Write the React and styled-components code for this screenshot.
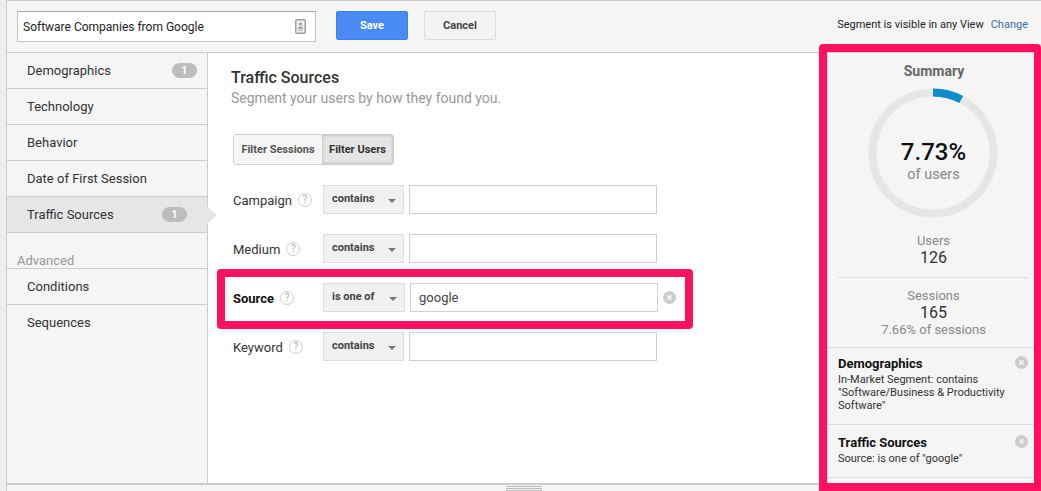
import React from "react";
import styled, { createGlobalStyle } from "styled-components";

const Global = createGlobalStyle`
  html, body { margin: 0; padding: 0; background: #eeeeee; }
  * { box-sizing: border-box; }
  body { font-family: Roboto, "Liberation Sans", sans-serif; overflow: hidden; }
`;

const Page = styled.div`
  width: 1041px;
  height: 491px;
  overflow: hidden;
  padding-left: 6px;
  background: #eeeeee;
`;
const Frame = styled.div`
  height: 491px;
  display: flex;
  flex-direction: column;
  border-left: 1px solid #cccccc;
  background: #ffffff;
`;
const TopBar = styled.header`
  height: 53px;
  flex: none;
  display: flex;
  align-items: flex-start;
  padding: 10px 13px 0 10px;
  background: #f5f5f5;
  border-top: 1px solid #cccccc;
  border-bottom: 1px solid #cccccc;
`;
const NameBox = styled.div`
  width: 299px;
  height: 31px;
  display: flex;
  align-items: center;
  justify-content: space-between;
  padding: 0 9px 0 5px;
  background: #fff;
  border: 1px solid #c4c4c4;
  border-top-color: #a8a8a8;
  font-size: 12px;
  color: #222;
`;
const ActionButton = styled.button`
  height: 29px;
  width: 72px;
  margin-left: ${p => p.$gap}px;
  border-radius: 2px;
  border: 1px solid ${p => (p.$primary ? "#3f7fe8" : "#dcdcdc")};
  background: ${p => (p.$primary ? "#4a8af4" : "#f3f3f3")};
  color: ${p => (p.$primary ? "#fff" : "#444")};
  font: 700 11px Roboto, sans-serif;
  padding: 0;
`;
const Visibility = styled.div`
  margin-left: auto;
  display: flex;
  gap: 7px;
  height: 27px;
  align-items: center;
  font-size: 11px;
  color: #222;
`;
const ChangeLink = styled.a`
  color: #3a6ea5;
`;
const Body = styled.div`
  flex: 1;
  display: flex;
  min-height: 0;
`;
const Sidebar = styled.nav`
  width: 201px;
  flex: none;
  background: #f5f5f5;
  border-right: 1px solid #cccccc;
`;
const NavItem = styled.div`
  position: relative;
  height: 36px;
  padding: 0 10px 1px 20px;
  display: flex;
  align-items: center;
  justify-content: space-between;
  border-bottom: ${p => (p.$last ? "none" : "1px solid #cccccc")};
  background: ${p => (p.$active ? "#e6e6e6" : "transparent")};
  font-size: 13px;
  color: #333;
  ${p => p.$active && `padding-right: 20px;`}
`;
const Badge = styled.span`
  width: 25px;
  height: 15px;
  border-radius: 8px;
  background: #bdbdbd;
  color: #fff;
  font-size: 11px;
  font-weight: 700;
  display: flex;
  align-items: center;
  justify-content: center;
`;
const Pointer = styled.span`
  position: absolute;
  right: -10px;
  top: 9px;
  width: 0;
  height: 0;
  border-top: 9px solid transparent;
  border-bottom: 9px solid transparent;
  border-left: 10px solid #e6e6e6;
`;
const SideHeading = styled.div`
  height: 36px;
  padding: 20px 0 0 10px;
  border-bottom: 1px solid #cccccc;
  font-size: 13px;
  line-height: 15px;
  color: #999;
`;
const Main = styled.main`
  flex: 1;
  padding: 15px 0 0 23px;
  min-width: 0;
`;
const Title = styled.h2`
  margin: 0;
  font-size: 16px;
  line-height: 19px;
  font-weight: 500;
  color: #333;
`;
const Subtitle = styled.p`
  margin: 3px 0 0;
  font-size: 14px;
  line-height: 17px;
  color: #999;
`;
const Toggle = styled.div`
  display: inline-flex;
  margin: 27px 0 0 2px;
  height: 31px;
  border: 1px solid #cfcfcf;
  border-radius: 3px;
  overflow: hidden;
  vertical-align: top;
`;
const ToggleItem = styled.div`
  display: flex;
  align-items: center;
  justify-content: center;
  width: ${p => p.$w}px;
  font-size: 11px;
  font-weight: 700;
  color: ${p => (p.$on ? "#333" : "#555")};
  background: ${p => (p.$on ? "#e4e4e4" : "#f5f5f5")};
  box-shadow: ${p => (p.$on ? "inset 0 0 3px #a9a9a9" : "none")};
`;
const Rows = styled.div`
  margin-top: 20px;
  display: flex;
  flex-direction: column;
  gap: 20px;
`;
const Row = styled.div`
  position: relative;
  height: 29px;
  display: flex;
  align-items: center;
  padding-left: 2px;
`;
const RowLabel = styled.div`
  width: 90px;
  flex: none;
  display: flex;
  align-items: center;
  gap: 6px;
  padding-top: 1px;
  font-size: 13px;
  font-weight: ${p => (p.$bold ? 700 : 400)};
  color: ${p => (p.$bold ? "#111" : "#333")};
`;
const Help = styled.span`
  width: 14px;
  height: 14px;
  flex: none;
  border: 1px solid #cfcfcf;
  border-radius: 50%;
  font-size: 10px;
  font-weight: 400;
  line-height: 12px;
  text-align: center;
  color: #aaa;
`;
const Select = styled.div`
  width: ${p => (p.$wide ? 82 : 81)}px;
  height: 29px;
  flex: none;
  padding: 6px 0 0 8px;
  position: relative;
  border: 1px solid #dcdcdc;
  background: #f1f1f1;
  font-size: 11px;
  line-height: 13px;
  font-weight: 700;
  color: #444;
  &::after {
    content: "";
    position: absolute;
    right: 7px;
    top: 13px;
    border-top: 4px solid #777;
    border-left: 4px solid transparent;
    border-right: 4px solid transparent;
  }
`;
const ValueInput = styled.input`
  width: 248px;
  height: 29px;
  margin-left: 5px;
  padding: 0 8px;
  border: 1px solid #cfcfcf;
  outline: none;
  background: #fff;
  font: 13px Roboto, sans-serif;
  color: #444;
`;
const Clear = styled.svg`
  width: ${p => p.$size}px;
  height: ${p => p.$size}px;
  flex: none;
  display: block;
`;
const RowClear = styled.span`
  margin-left: 5px;
  display: flex;
`;
const RowHighlight = styled.div`
  position: absolute;
  left: -14px;
  width: 476px;
  top: -14px;
  bottom: -17px;
  border: 8px solid #ff1160;
  border-radius: 4px;
  pointer-events: none;
`;
const Summary = styled.aside`
  position: relative;
  width: 214px;
  flex: none;
  background: #f5f5f5;
  border-left: 1px solid #dddddd;
`;
const SummaryHighlight = styled.div`
  position: absolute;
  left: -9px;
  right: 0;
  top: -9px;
  bottom: -8px;
  border: 8px solid #ff1160;
  border-right-width: 7px;
  border-radius: 4px 4px 0 0;
  pointer-events: none;
  z-index: 3;
`;
const SummaryTitle = styled.div`
  margin: 0 1px 0 0;
  padding-top: 10px;
  text-align: center;
  font-size: 14px;
  line-height: 16px;
  font-weight: 700;
  color: #666;
`;
const RingWrap = styled.div`
  position: relative;
  width: 130px;
  height: 130px;
  margin: 9px auto 0;
  transform: translateX(-2px);
`;
const RingText = styled.div`
  position: absolute;
  inset: 0;
  display: flex;
  flex-direction: column;
  align-items: center;
  justify-content: center;
  padding: 15px 0 0 2px;
`;
const Percent = styled.div`
  font-size: 24px;
  line-height: 28px;
  font-weight: 500;
  color: #111;
`;
const OfUsers = styled.div`
  font-size: 14.5px;
  line-height: 18px;
  color: #888;
`;
const Stat = styled.div`
  margin: 0 12px 0 10px;
  text-align: center;
  padding: ${p => p.$pad};
  border-bottom: ${p => (p.$rule ? "1px solid #dddddd" : "none")};
`;
const StatLabel = styled.div`
  font-size: 13px;
  line-height: 16px;
  color: #888;
`;
const StatValue = styled.div`
  font-size: 16px;
  line-height: 18px;
  color: #333;
`;
const StatNote = styled.div`
  font-size: 13px;
  line-height: 16px;
  color: #888;
`;
const Criteria = styled.div`
  position: relative;
  height: ${p => p.$h}px;
  padding: ${p => p.$top}px 30px 0 10px;
  border-top: 1px solid #dddddd;
`;
const CriteriaTitle = styled.div`
  font-size: 13px;
  line-height: 16px;
  font-weight: 700;
  color: #111;
`;
const CriteriaText = styled.div`
  font-size: 11px;
  line-height: 13px;
  margin-top: 1px;
  color: #333;
  margin-right: -20px;
`;
const CriteriaClose = styled.span`
  position: absolute;
  right: 13px;
  top: ${p => p.$top}px;
`;
const BottomBar = styled.footer`
  position: relative;
  height: 8px;
  flex: none;
  display: flex;
  justify-content: center;
  background: #f5f5f5;
  border-top: 2px solid #cccccc;
  padding: 1px 0 0 0;
`;
const Handle = styled.span`
  width: 36px;
  height: 5px;
  border-top: 1px solid #bbb;
  border-bottom: 1px solid #bbb;
  background: linear-gradient(#f5f5f5 0 1px, #bbb 1px 2px, #f5f5f5 2px);
`;

const ClearIcon = ({ size = 13 }) => (
  <Clear $size={size} viewBox="0 0 12 12">
    <circle cx="6" cy="6" r="6" fill="#cccccc" />
    <path d="M4 4l4 4M8 4l-4 4" stroke="#f5f5f5" strokeWidth="1.4" />
  </Clear>
);

const ContactIcon = () => (
  <svg width="11" height="15" viewBox="0 0 11 15">
    <rect x="0.75" y="0.75" width="9.5" height="13.5" rx="1" fill="#f0f0f0" stroke="#a0a0a0" strokeWidth="1.5" />
    <circle cx="5.5" cy="5" r="1.5" fill="#999999" />
    <path d="M3 10c0-2 1-2.8 2.5-2.8S8 8 8 10z" fill="#a8a8a8" />
    <rect x="3" y="10.5" width="5" height="1.5" fill="#c4c4c4" />
  </svg>
);

const Ring = () => {
  const r = 60.5;
  const c = 2 * Math.PI * r;
  return (
    <svg width="130" height="130" viewBox="0 0 130 130">
      <circle cx="65" cy="65" r={r} fill="none" stroke="#e6e6e6" strokeWidth="8" />
      <circle
        cx="65"
        cy="65"
        r={r}
        fill="none"
        stroke="#0b8ecb"
        strokeWidth="8"
        strokeDasharray={`${c * 0.0773} ${c}`}
        transform="rotate(-90 65 65)"
      />
    </svg>
  );
};

const filters = [
  { name: "Campaign", op: "contains", value: "" },
  { name: "Medium", op: "contains", value: "" },
  { name: "Source", op: "is one of", value: "google", hot: true },
  { name: "Keyword", op: "contains", value: "" },
];

export default function App() {
  return (
    <Page>
      <Global />
      <Frame>
        <TopBar>
          <NameBox>
            Software Companies from Google
            <ContactIcon />
          </NameBox>
          <ActionButton $primary $gap={20}>Save</ActionButton>
          <ActionButton $gap={16}>Cancel</ActionButton>
          <Visibility>
            <span>Segment is visible in any View</span>
            <ChangeLink>Change</ChangeLink>
          </Visibility>
        </TopBar>
        <Body>
          <Sidebar>
            <NavItem>Demographics<Badge>1</Badge></NavItem>
            <NavItem>Technology</NavItem>
            <NavItem>Behavior</NavItem>
            <NavItem>Date of First Session</NavItem>
            <NavItem $active>Traffic Sources<Badge>1</Badge><Pointer /></NavItem>
            <SideHeading>Advanced</SideHeading>
            <NavItem>Conditions</NavItem>
            <NavItem $last>Sequences</NavItem>
          </Sidebar>
          <Main>
            <Title>Traffic Sources</Title>
            <Subtitle>Segment your users by how they found you.</Subtitle>
            <Toggle>
              <ToggleItem $w={88}>Filter Sessions</ToggleItem>
              <ToggleItem $w={71} $on>Filter Users</ToggleItem>
            </Toggle>
            <Rows>
              {filters.map(f => (
                <Row key={f.name}>
                  <RowLabel $bold={f.hot}>{f.name}<Help>?</Help></RowLabel>
                  <Select $wide={f.hot}>{f.op}</Select>
                  <ValueInput readOnly value={f.value} />
                  {f.hot && <RowClear><ClearIcon /></RowClear>}
                  {f.hot && <RowHighlight />}
                </Row>
              ))}
            </Rows>
          </Main>
          <Summary>
            <SummaryTitle>Summary</SummaryTitle>
            <RingWrap>
              <Ring />
              <RingText>
                <Percent>7.73%</Percent>
                <OfUsers>of users</OfUsers>
              </RingText>
            </RingWrap>
            <Stat $rule $pad="15px 0 10px">
              <StatLabel>Users</StatLabel>
              <StatValue>126</StatValue>
            </Stat>
            <Stat $pad="10px 0 9px">
              <StatLabel>Sessions</StatLabel>
              <StatValue>165</StatValue>
              <StatNote>7.66% of sessions</StatNote>
            </Stat>
            <Criteria $h={77} $top={8}>
              <CriteriaTitle>Demographics</CriteriaTitle>
              <CriteriaText>In-Market Segment: contains<br />"Software/Business &amp; Productivity<br />Software"</CriteriaText>
              <CriteriaClose $top={8}><ClearIcon /></CriteriaClose>
            </Criteria>
            <Criteria $h={53} $top={10}>
              <CriteriaTitle>Traffic Sources</CriteriaTitle>
              <CriteriaText>Source: is one of "google"</CriteriaText>
              <CriteriaClose $top={10}><ClearIcon /></CriteriaClose>
            </Criteria>
            <Criteria $h={6} $top={0} />
            <SummaryHighlight />
          </Summary>
        </Body>
        <BottomBar><Handle /></BottomBar>
      </Frame>
    </Page>
  );
}
